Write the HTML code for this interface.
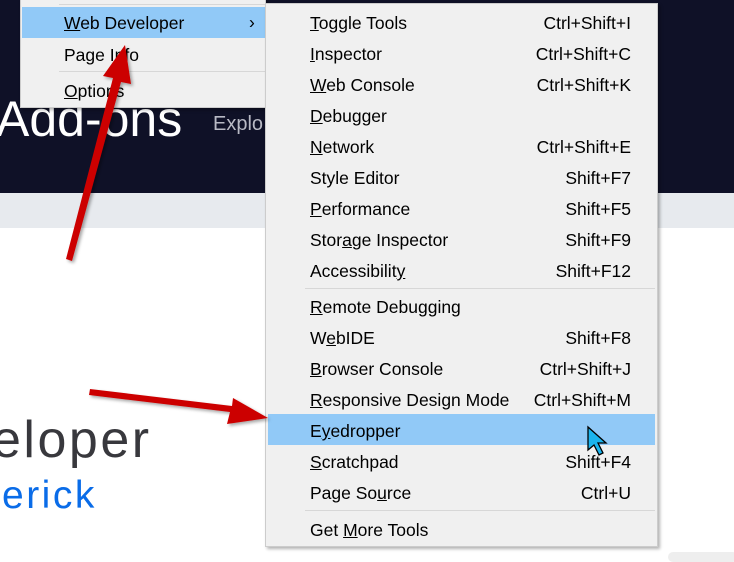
<!DOCTYPE html>
<html><head><meta charset="utf-8"><style>
*{margin:0;padding:0;box-sizing:border-box}
body{width:734px;height:558px;overflow:hidden;position:relative;background:#fff;font-family:"Liberation Sans",sans-serif}
.hdr{position:absolute;left:0;top:0;width:734px;height:193px;background:#0f1127}
.band{position:absolute;left:0;top:193px;width:734px;height:35px;background:#e7eaee}
.t{position:absolute;white-space:nowrap}
.menu{position:absolute;background:#f0f0f0;border:1px solid #ccc;box-shadow:2px 2px 3px rgba(0,0,0,.3)}
.it{position:absolute;font-size:17.5px;color:#000;white-space:nowrap;line-height:20px}
.sc{position:absolute;font-size:17.5px;color:#000;white-space:nowrap;line-height:20px;text-align:right;right:26px}
.sep{position:absolute;height:1px;background:#d7d7d7}
.hl{position:absolute;background:#91c9f7}
</style></head><body>
<div class="hdr"></div>
<div class="band"></div>
<div class="t" style="left:-4px;top:90px;font-size:50px;color:#fff;font-weight:300">Add-ons</div>
<div class="t" style="left:213px;top:113px;font-size:20px;color:#b8b9c4">Explo</div>
<div class="t" style="left:-8px;top:410px;font-size:52px;color:#38383d;letter-spacing:2.5px">eloper</div>
<div class="t" style="left:2px;top:474px;font-size:39px;color:#0a6ce8;letter-spacing:2.5px">erick</div>
<div style="position:absolute;left:668px;top:552px;width:70px;height:10px;background:#eee;border-radius:5px"></div>

<div class="menu" style="left:20px;top:-2px;width:246px;height:110px">
<div class="sep" style="left:38px;top:5px;width:208px"></div>
<div class="hl" style="left:1px;top:8px;width:245px;height:31px"></div>
<div class="it" style="left:43px;top:14px"><u>W</u>eb Developer</div>
<div class="it" style="left:228px;top:13px">›</div>
<div class="it" style="left:43px;top:46px">Page I<u>n</u>fo</div>
<div class="sep" style="left:38px;top:72px;width:208px"></div>
<div class="it" style="left:43px;top:82px"><u>O</u>ptions</div>
</div>

<div class="menu" style="left:265px;top:3px;width:393px;height:544px">
<div class="hl" style="left:2px;top:410px;width:387px;height:31px"></div>
<div class="it" style="left:44px;top:9px"><u>T</u>oggle Tools</div><div class="sc" style="top:9px">Ctrl+Shift+I</div>
<div class="it" style="left:44px;top:40px"><u>I</u>nspector</div><div class="sc" style="top:40px">Ctrl+Shift+C</div>
<div class="it" style="left:44px;top:71px"><u>W</u>eb Console</div><div class="sc" style="top:71px">Ctrl+Shift+K</div>
<div class="it" style="left:44px;top:102px"><u>D</u>ebugger</div>
<div class="it" style="left:44px;top:133px"><u>N</u>etwork</div><div class="sc" style="top:133px">Ctrl+Shift+E</div>
<div class="it" style="left:44px;top:164px">Style Editor</div><div class="sc" style="top:164px">Shift+F7</div>
<div class="it" style="left:44px;top:195px"><u>P</u>erformance</div><div class="sc" style="top:195px">Shift+F5</div>
<div class="it" style="left:44px;top:226px">Stor<u>a</u>ge Inspector</div><div class="sc" style="top:226px">Shift+F9</div>
<div class="it" style="left:44px;top:257px">Accessibilit<u>y</u></div><div class="sc" style="top:257px">Shift+F12</div>
<div class="sep" style="left:39px;top:284px;width:350px"></div>
<div class="it" style="left:44px;top:293px"><u>R</u>emote Debugging</div>
<div class="it" style="left:44px;top:324px">W<u>e</u>bIDE</div><div class="sc" style="top:324px">Shift+F8</div>
<div class="it" style="left:44px;top:355px"><u>B</u>rowser Console</div><div class="sc" style="top:355px">Ctrl+Shift+J</div>
<div class="it" style="left:44px;top:386px"><u>R</u>esponsive Design Mode</div><div class="sc" style="top:386px">Ctrl+Shift+M</div>
<div class="it" style="left:44px;top:417px">E<u>y</u>edropper</div>
<div class="it" style="left:44px;top:448px"><u>S</u>cratchpad</div><div class="sc" style="top:448px">Shift+F4</div>
<div class="it" style="left:44px;top:479px">Page So<u>u</u>rce</div><div class="sc" style="top:479px">Ctrl+U</div>
<div class="sep" style="left:39px;top:506px;width:350px"></div>
<div class="it" style="left:44px;top:516px">Get <u>M</u>ore Tools</div>
</div>

<svg style="position:absolute;left:0;top:0" width="734" height="558">
<defs><filter id="s"><feDropShadow dx="2" dy="2" stdDeviation="1.5" flood-opacity=".35"/></filter></defs>
<g filter="url(#s)" fill="#cc0000">
<polygon points="66,259 72,261 121,82 131,84 125,45 103,76 113,78"/>
<polygon points="90,389 89,395 230,412 227,424 268,418 233,398 232,406"/>
</g>
<path d="M588,427 L588,450 L594,445 L599,455 L603,453 L598,443 L606,443 Z" fill="#1ab4ee" stroke="#000" stroke-width="1.3"/>
</svg>
</body></html>
